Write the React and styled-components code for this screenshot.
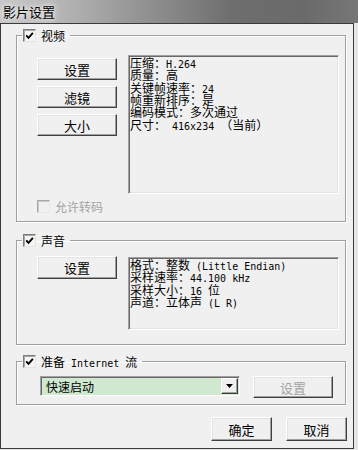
import React from "react";
import styled, { createGlobalStyle } from "styled-components";

const GlobalStyle = createGlobalStyle`
  html, body {
    margin: 0;
    padding: 0;
    background: #e6e6e6;
  }
  body {
    font-family: "Noto Sans CJK SC", "Liberation Sans", sans-serif;
    font-size: 12px;
    color: #000;
  }
`;

const Window = styled.div`
  width: 358px;
  height: 450px;
  display: flex;
  flex-direction: column;
  background: #e6e6e6;
  overflow: hidden;
`;

const TitleBar = styled.div`
  height: 23px;
  flex: none;
  display: flex;
  align-items: center;
  padding-left: 3px;
  font-size: 13px;
  background: linear-gradient(to right, #c8c8c8 0%, #b8b8b8 15%, #929292 40%, #6e6e6e 65%, #6a6a6a 85%, #777 100%);
  text-shadow: 0 0 4px #fff, 0 0 8px rgba(255, 255, 255, 0.8);
`;

const Frame = styled.div`
  width: 354px;
  height: 426px;
  box-sizing: border-box;
  border: 1px solid #3a3a3a;
  background: #f0f0f0;
  padding: 5px 7px 0 15px;
  display: flex;
  flex-direction: column;
`;

const Group = styled.fieldset`
  margin: ${p => p.$top || 0}px 0 0 0;
  padding: 0;
  min-width: 0;
  height: ${p => p.$h}px;
  box-sizing: border-box;
  border: 1px solid #a0a0a0;
  box-shadow: inset 1px 1px #fff, 1px 1px #fff;
`;

const Legend = styled.legend`
  margin-left: 5px;
  padding: 0 5px 0 1px;
  height: 13px;
  display: flex;
  align-items: center;
  gap: 5px;
  line-height: 13px;
`;

const LegendText = styled.span`
  white-space: pre;
`;

const Inner = styled.div`
  padding: ${p => p.$pad};
`;

const Row = styled.div`
  display: flex;
  align-items: flex-start;
`;

const ButtonCol = styled.div`
  display: flex;
  flex-direction: column;
  gap: 6px;
  margin-top: ${p => p.$top || 0}px;
  margin-right: 11px;
`;

const Button = styled.button`
  width: ${p => p.$w || 80}px;
  height: ${p => p.$h || 22}px;
  box-sizing: border-box;
  margin: 0;
  padding: 0;
  background: #f0f0f0;
  font-family: inherit;
  font-size: 13px;
  color: ${p => (p.disabled ? "#a3a3a3" : "#000")};
  border: 1px solid;
  border-color: #fff #404040 #404040 #fff;
  box-shadow: inset -1px -1px #a0a0a0, inset 1px 1px #e3e3e3;
`;

const InfoBox = styled.div`
  width: 211px;
  height: ${p => p.$h}px;
  margin-top: ${p => p.$top || 0}px;
  box-sizing: border-box;
  padding: 1px 0 0 1px;
  border: 1px solid;
  border-color: #a0a0a0 #fff #fff #a0a0a0;
  box-shadow: inset 1px 1px #696969, inset -1px -1px #e3e3e3;
  background: #f0f0f0;
`;

const InfoLine = styled.div`
  height: 12.33px;
  line-height: 12px;
  white-space: pre;
`;

const Latin = styled.span`
  font-family: "DejaVu Sans Mono", "Liberation Mono", monospace;
  font-size: 10px;
  line-height: 1;
`;

const CheckRow = styled.div`
  display: flex;
  align-items: center;
  gap: 5px;
  margin-top: 6px;
  color: ${p => (p.$disabled ? "#a3a3a3" : "#000")};
  line-height: 13px;
`;

const Box = styled.span`
  width: 13px;
  height: 13px;
  flex: none;
  box-sizing: border-box;
  display: inline-flex;
  align-items: center;
  justify-content: center;
  border: 1px solid;
  border-color: ${p => (p.$disabled ? "#a8a8a8 #e8e8e8 #e8e8e8 #a8a8a8" : "#7c7c7c #e4e4e4 #e4e4e4 #7c7c7c")};
  box-shadow: inset 1px 1px ${p => (p.$disabled ? "#c8c8c8" : "#a8a8a8")};
  background: ${p => (p.$disabled ? "#f0f0f0" : "#f4f6f4")};
`;

const InternetRow = styled.div`
  display: flex;
  align-items: flex-start;
  gap: 13px;
`;

const Combo = styled.div`
  width: 200px;
  height: 20px;
  box-sizing: border-box;
  display: flex;
  border: 1px solid;
  border-color: #a0a0a0 #fff #fff #a0a0a0;
  box-shadow: inset 1px 1px #696969;
  background: #cfe8cf;
`;

const ComboText = styled.div`
  flex: 1;
  padding: 1px 0 0 5px;
  line-height: 17px;
`;

const ComboArrow = styled.div`
  width: 17px;
  height: 16px;
  margin: 1px 1px 0 0;
  box-sizing: border-box;
  display: flex;
  align-items: center;
  justify-content: center;
  background: #f0f0f0;
  border: 1px solid;
  border-color: #fff #404040 #404040 #fff;
  box-shadow: inset -1px -1px #a0a0a0;
`;

const Footer = styled.div`
  display: flex;
  justify-content: flex-end;
  gap: 14px;
  margin: 12px -1px 0 0;
`;

const mixed = text =>
  text.split(/([\x20-\x7e]+)/).map((part, i) => (i % 2 ? <Latin key={i}>{part}</Latin> : part));

const Check = ({ checked, disabled }) => (
  <Box $disabled={disabled}>
    {checked && (
      <svg width="9" height="9" viewBox="0 0 9 9">
        <path d="M1.2 4.3 L3.5 6.8 L7.9 1.8" fill="none" stroke="#000" strokeWidth="1.9" />
      </svg>
    )}
  </Box>
);

const videoInfo = [
  "压缩：H.264",
  "质量：高",
  "关键帧速率：24",
  "帧重新排序：是",
  "编码模式：多次通过",
  "尺寸： 416x234 （当前）",
];

const audioInfo = ["格式：整数 (Little Endian)", "采样速率：44.100 kHz", "采样大小：16 位", "声道：立体声 (L R)"];

const Info = ({ lines, h, top }) => (
  <InfoBox $h={h} $top={top}>
    {lines.map(l => (
      <InfoLine key={l}>{mixed(l)}</InfoLine>
    ))}
  </InfoBox>
);

const GroupHead = ({ label }) => (
  <Legend>
    <Check checked />
    <LegendText>{mixed(label)}</LegendText>
  </Legend>
);

export default function App() {
  return (
    <Window>
      <GlobalStyle />
      <TitleBar>影片设置</TitleBar>
      <Frame>
        <Group $h={193}>
          <GroupHead label="视频" />
          <Inner $pad="13px 5px 0 20px">
            <Row>
              <ButtonCol $top={3}>
                <Button>设置</Button>
                <Button>滤镜</Button>
                <Button>大小</Button>
              </ButtonCol>
              <Info lines={videoInfo} h={139} />
            </Row>
            <CheckRow $disabled>
              <Check disabled />
              允许转码
            </CheckRow>
          </Inner>
        </Group>

        <Group $top={12} $h={111}>
          <GroupHead label="声音" />
          <Inner $pad="9px 5px 0 20px">
            <Row>
              <ButtonCol>
                <Button $h={23}>设置</Button>
              </ButtonCol>
              <Info lines={audioInfo} h={73} top={1} />
            </Row>
          </Inner>
        </Group>

        <Group $top={10} $h={50}>
          <GroupHead label="准备 Internet 流" />
          <Inner $pad="8px 0 0 23px">
            <InternetRow>
              <Combo>
                <ComboText>快速启动</ComboText>
                <ComboArrow>
                  <svg width="7" height="4" viewBox="0 0 7 4">
                    <path d="M0 0 H7 L3.5 4 Z" fill="#000" />
                  </svg>
                </ComboArrow>
              </Combo>
              <Button disabled>设置</Button>
            </InternetRow>
          </Inner>
        </Group>

        <Footer>
          <Button $w={61} $h={24}>确定</Button>
          <Button $w={61} $h={24}>取消</Button>
        </Footer>
      </Frame>
    </Window>
  );
}
